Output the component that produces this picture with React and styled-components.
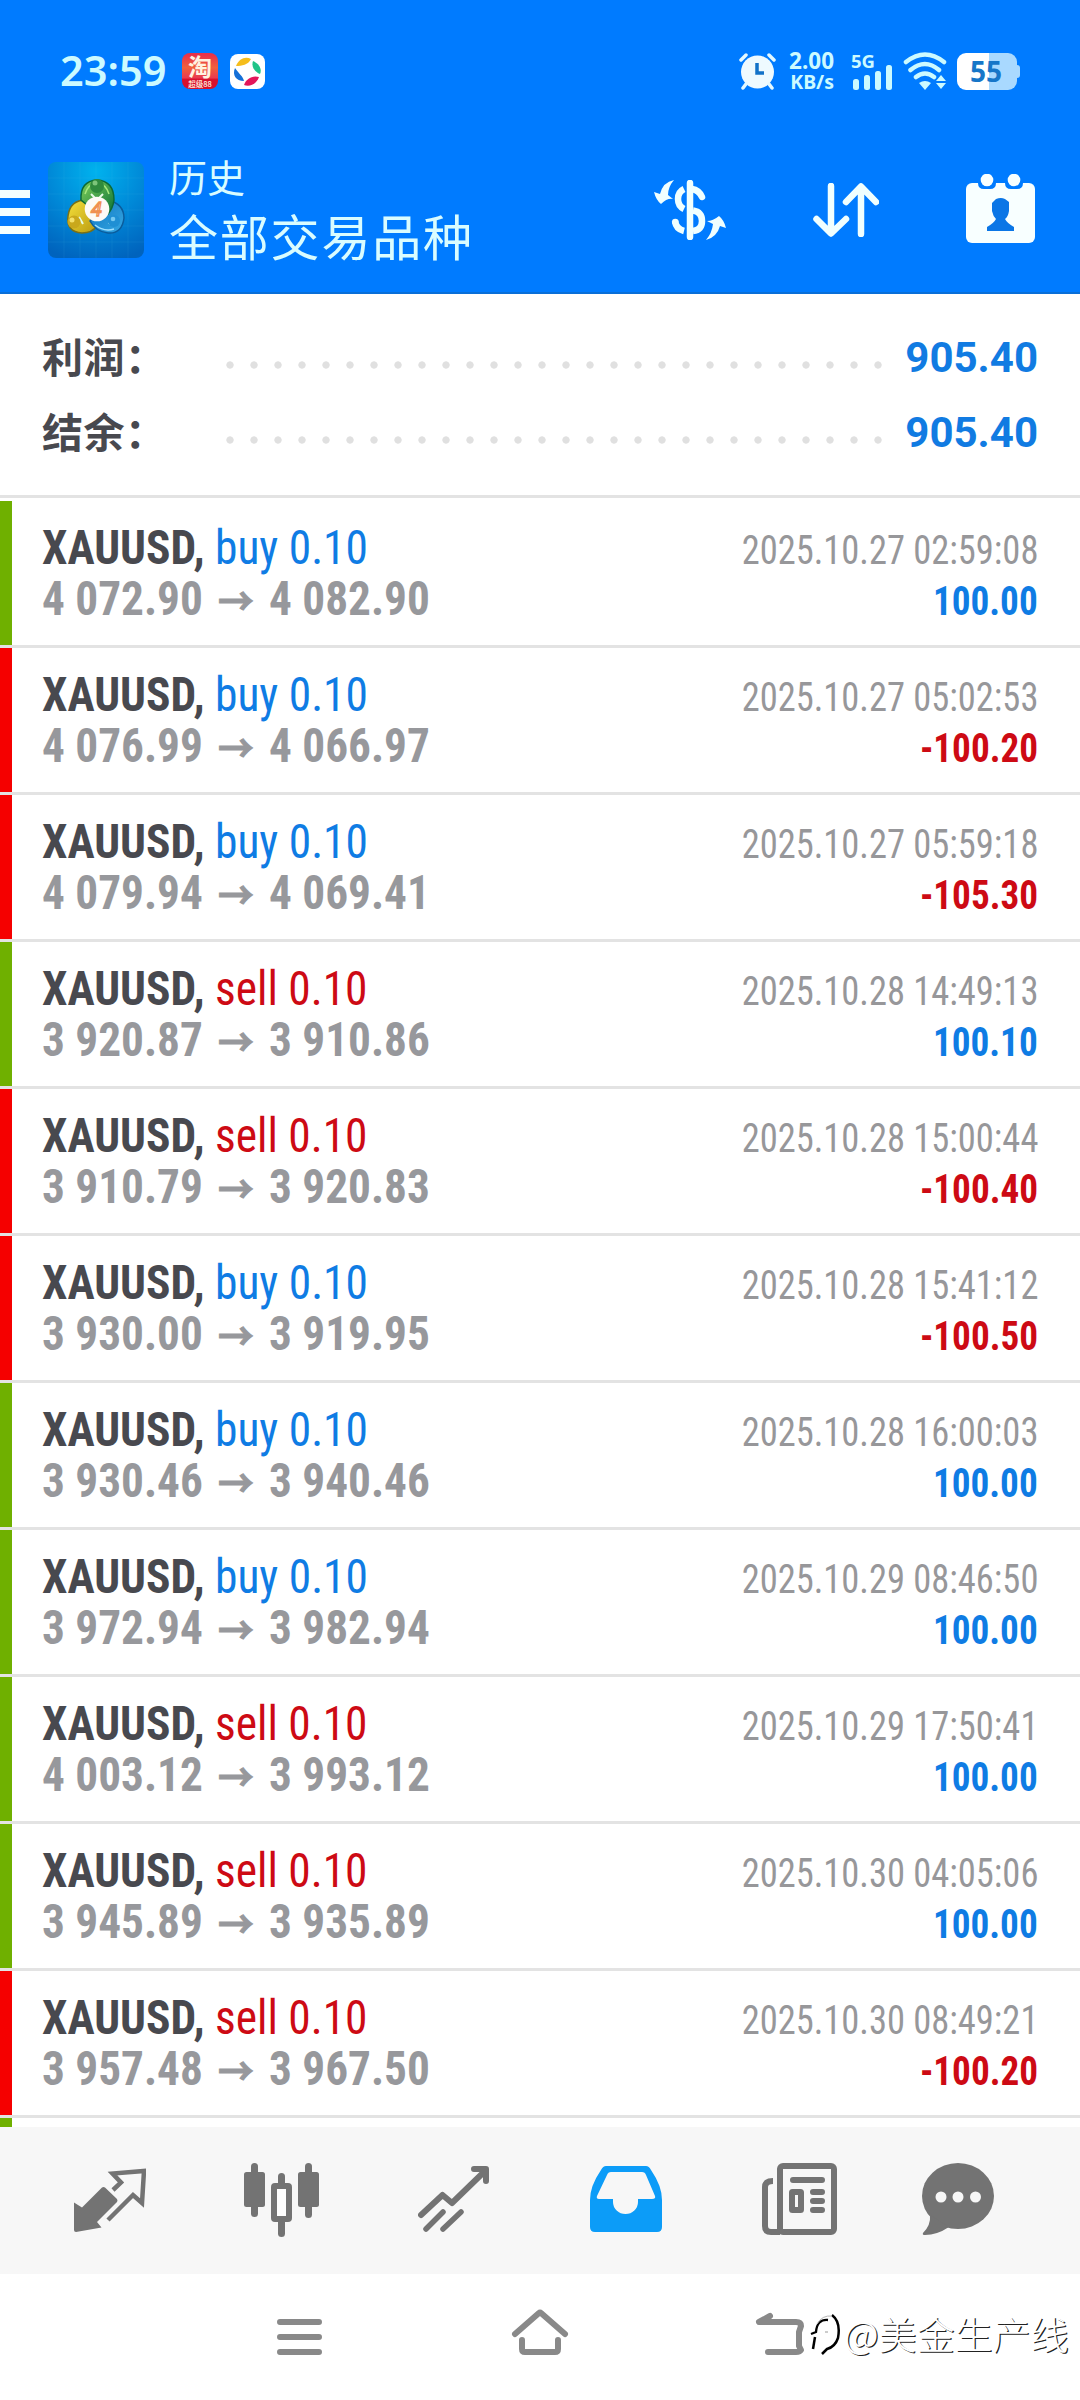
import React from "react";
import styled, { createGlobalStyle } from "styled-components";

const deals = [
	{ side: "buy", open: "4 072.90", close: "4 082.90", time: "2025.10.27 02:59:08", profit: "100.00" },
	{ side: "buy", open: "4 076.99", close: "4 066.97", time: "2025.10.27 05:02:53", profit: "-100.20" },
	{ side: "buy", open: "4 079.94", close: "4 069.41", time: "2025.10.27 05:59:18", profit: "-105.30" },
	{ side: "sell", open: "3 920.87", close: "3 910.86", time: "2025.10.28 14:49:13", profit: "100.10" },
	{ side: "sell", open: "3 910.79", close: "3 920.83", time: "2025.10.28 15:00:44", profit: "-100.40" },
	{ side: "buy", open: "3 930.00", close: "3 919.95", time: "2025.10.28 15:41:12", profit: "-100.50" },
	{ side: "buy", open: "3 930.46", close: "3 940.46", time: "2025.10.28 16:00:03", profit: "100.00" },
	{ side: "buy", open: "3 972.94", close: "3 982.94", time: "2025.10.29 08:46:50", profit: "100.00" },
	{ side: "sell", open: "4 003.12", close: "3 993.12", time: "2025.10.29 17:50:41", profit: "100.00" },
	{ side: "sell", open: "3 945.89", close: "3 935.89", time: "2025.10.30 04:05:06", profit: "100.00" },
	{ side: "sell", open: "3 957.48", close: "3 967.50", time: "2025.10.30 08:49:21", profit: "-100.20" },
];

const totals = [
	{ label: "利润：", value: "905.40" },
	{ label: "结余：", value: "905.40" },
];

const App = () => {
	return (
		<Screen>
			<GlobalStyle />
			<Top>
				<StatusBar />
				<Header />
			</Top>
			<Summary>
				{totals.map((item) => (
					<Total key={item.label}>
						<TotalLabel>{item.label}</TotalLabel>
						<Dots />
						<TotalValue>{item.value}</TotalValue>
					</Total>
				))}
			</Summary>
			<List>
				{deals.map((deal) => (
					<Deal key={deal.time} {...deal} />
				))}
				<Row $loss={false} />
			</List>
			<TabBar>
				<Tab $left={74}><QuotesIcon /></Tab>
				<Tab $left={98}><ChartIcon /></Tab>
				<Tab $left={99}><TradeIcon /></Tab>
				<Tab $left={101} $active><HistoryIcon /></Tab>
				<Tab $left={100}><NewsIcon /></Tab>
				<Tab $left={85}><ChatIcon /></Tab>
			</TabBar>
			<SystemNav>
				<MenuKey />
				<HomeKey />
				<BackKey />
				<Watermark>
					<WatermarkLogo />
					@美金生产线
				</Watermark>
			</SystemNav>
		</Screen>
	);
};

const Deal = ({ side, open, close, time, profit }) => {
	const loss = profit.startsWith("-");
	return (
		<Row $loss={loss}>
			<Line>
				<Symbol>
					XAUUSD, <Volume $side={side}>{side} 0.10</Volume>
				</Symbol>
				<Time>{time}</Time>
			</Line>
			<Line>
				<Price>
					{open} <Arrow>→</Arrow> {close}
				</Price>
				<Profit $loss={loss}>{profit}</Profit>
			</Line>
		</Row>
	);
};

const StatusBar = () => (
	<Status>
		<Clock>23:59</Clock>
		<TaobaoBadge>
			<b>淘</b>
			<i>超级88</i>
		</TaobaoBadge>
		<svg width="35" height="35" viewBox="0 0 35 35">
			<rect width="35" height="35" rx="8" fill="#fff" />
			<path d="M6 12C9 4 16 2 21 5C18 11 12 12 6 12Z" fill="#f5bd1c" />
			<path d="M23 7C30 10 32 16 30 20C25 18 21 13 23 7Z" fill="#1fc488" />
			<path d="M29 23C26 31 19 33 14 31C16 25 22 21 29 23Z" fill="#e3175a" />
			<path d="M5 14C2 21 6 27 14 27C13 22 9 20 5 14Z" fill="#1470d8" />
		</svg>
		<Spacer />
		<svg width="37" height="38" viewBox="0 0 37 38" fill="none" stroke="#e4f9ff" strokeLinecap="round">
			<circle cx="18.500" cy="20" r="16.500" fill="#eefaff" stroke="none" />
			<path d="M2 8L7 3M35 8L30 3" strokeWidth="3.500" />
			<path d="M7 32L4 36M30 32L33 36" strokeWidth="3.500" />
			<path d="M18 11V21H25" stroke="#1272c8" strokeWidth="3.500" strokeLinecap="butt" />
		</svg>
		<Speed>
			<span>2.00</span>
			<small>KB/s</small>
		</Speed>
		<Signal>
			<span>5G</span>
			<svg width="42" height="38" viewBox="0 0 42 38" fill="#ccfaff">
				<rect x="2" y="27" width="6" height="11" rx="2.500" />
				<rect x="13" y="23" width="6" height="15" rx="2.500" />
				<rect x="24" y="19" width="6" height="19" rx="2.500" />
				<rect x="35" y="13" width="6" height="25" rx="2.500" />
			</svg>
		</Signal>
		<svg width="44" height="38" viewBox="0 0 44 38" fill="none" stroke="#ccfaff" strokeWidth="4.500" strokeLinecap="round">
			<path d="M3 10Q22 -5 41 10M7.500 18Q22 6 36 18M13 25Q22 18 31 25" />
			<path d="M22 38L16 31Q22 27 28 31Z" fill="#ccfaff" stroke="none" />
			<path d="M38 23L43 29H33ZM38 37L43 31H33Z" fill="#ccfaff" stroke="none" />
		</svg>
		<Battery>55</Battery>
	</Status>
);

const Header = () => (
	<HeaderRow>
		<Burger>
			<span />
			<span />
			<span />
		</Burger>
		<AppLogo />
		<Titles>
			<small>历史</small>
			<h1>全部交易品种</h1>
		</Titles>
		<Actions>
			<svg width="72" height="60" viewBox="0 0 72 60" fill="none" stroke="#f0ffff" strokeWidth="6.500">
				<path d="M36 3V57" strokeLinecap="round" />
				<path d="M30 9Q24 12 24 19Q24 26 30 29" />
				<path d="M38 9Q45 10 48 17" strokeLinecap="round" />
				<path d="M39 30.500Q48 32 48 41Q48 50 39 51" />
				<path d="M21 41Q22 49 30 51" />
				<circle cx="21.300" cy="42" r="3.300" fill="#f0ffff" stroke="none" />
				<path d="M20 0Q9 2 6 14L0 12Q2 20 7 24Q13 18 19 19L14 15Q14 7 20 0Z" fill="#f0ffff" stroke="none" />
				<path d="M52 60Q63 57 66 46L72 48Q70 40 65 36Q59 41 53 41L59 44Q58 53 52 60Z" fill="#f0ffff" stroke="none" />
			</svg>
			<svg width="66" height="54" viewBox="0 0 66 54" fill="none" stroke="#f0ffff" strokeWidth="6.500" strokeLinecap="round" strokeLinejoin="round">
				<path d="M18 3V50M3.500 36L18 50.500L33 36" />
				<path d="M48 51V4M33 19L48 3.500L63 19" />
			</svg>
			<svg width="69" height="72" viewBox="0 1 69 72">
				<rect y="10" width="69" height="60" rx="6" fill="#f8ffff" />
				<path d="M12 8H30V10Q30 16 24 16H18Q12 16 12 10ZM39 8H57V10Q57 16 51 16H45Q39 16 39 10Z" fill="#007bff" />
				<circle cx="21" cy="7" r="6.300" fill="#f8ffff" />
				<circle cx="48" cy="7" r="6.300" fill="#f8ffff" />
				<path d="M26 30L30 26Q35 24 39 26L43 29V38Q42 44 39 46Q41 50 48 54V58H21V54Q28 50 30 46Q27 43 26 38Z" fill="#0b76e6" />
			</svg>
		</Actions>
	</HeaderRow>
);

const AppLogo = () => (
	<Logo width="96" height="96" viewBox="0 0 96 96">
		<defs>
			<radialGradient id="sky" cx="50%" cy="10%" r="95%">
				<stop offset="0" stopColor="#00b2ee" />
				<stop offset="0.550" stopColor="#0086d6" />
				<stop offset="1" stopColor="#0063bd" />
			</radialGradient>
			<linearGradient id="leaf" x1="0" y1="0" x2="1" y2="1">
				<stop offset="0" stopColor="#7fd05a" />
				<stop offset="1" stopColor="#0c7238" />
			</linearGradient>
			<linearGradient id="gold" x1="0" y1="0" x2="1" y2="1">
				<stop offset="0" stopColor="#f6e13c" />
				<stop offset="1" stopColor="#b99a10" />
			</linearGradient>
			<linearGradient id="aqua" x1="0" y1="0" x2="1" y2="1">
				<stop offset="0" stopColor="#0f74bf" />
				<stop offset="1" stopColor="#35a8e4" />
			</linearGradient>
		</defs>
		<rect width="96" height="96" rx="8" fill="url(#sky)" />
		<path d="M16 0V96M32 0V96M48 0V96M64 0V96M80 0V96M0 16H96M0 32H96M0 48H96M0 64H96M0 80H96" stroke="#4cc4f4" strokeOpacity="0.100" />
		<path d="M38 38Q22 38 20 54Q18 70 34 71Q44 71 49 64Z" fill="url(#gold)" stroke="#77701a" strokeWidth="1.500" />
		<path d="M60 38Q76 42 76 56Q74 72 60 71Q48 70 42 59Z" fill="url(#aqua)" stroke="#0a5c9c" strokeWidth="1.500" />
		<path d="M33 38Q32 19 49 18Q66 19 66 38Q65 46 60 52L38 42Z" fill="url(#leaf)" stroke="#0d6a35" strokeWidth="1.500" />
		<path d="M37 32Q40 22 49 21Q58 22 61 32" fill="none" stroke="#a6e87e" strokeWidth="1.500" />
		<path d="M47 63Q56 70 66 67" fill="none" stroke="#9fe0ff" strokeWidth="1.500" />
		<path d="M43 32L47 36H51L55 32M31 55L35 62M67 55L61 62" stroke="#e6fbe6" strokeWidth="2" fill="none" />
		<circle cx="49" cy="24" r="7" fill="#2f8a3c" />
		<circle cx="47" cy="21" r="2.500" fill="#7cc479" />
		<circle cx="26" cy="60" r="6.500" fill="#c9a81c" />
		<circle cx="24" cy="58" r="2.500" fill="#f4e06a" />
		<circle cx="66" cy="59" r="6" fill="#1f8fd4" />
		<circle cx="65" cy="57" r="2.300" fill="#74c8f2" />
		<circle cx="49" cy="47" r="12.300" fill="#fdfaf6" />
		<text x="48.500" y="54" textAnchor="middle" fontFamily="Roboto" fontStyle="italic" fontSize="20" fill="none" stroke="#f09050" strokeWidth="1.300">4</text>
	</Logo>
);

const QuotesIcon = () => (
	<svg width="72" height="74" viewBox="0 -6 72 74">
		<path d="M39 21L47 13.500L38.500 4.500L70 2L68 34L59 26L34 51" fill="none" stroke="currentColor" strokeWidth="4.500" />
		<path d="M28 18.500Q29.500 17.500 31 18.500L43 30Q44 32 43 33L23 53L27.500 58.500L2 63Q0 63 0 61V33.500L8 38.500Z" fill="currentColor" />
	</svg>
);

const ChartIcon = () => (
	<svg width="75" height="74" viewBox="0 0 75 74" fill="currentColor">
		<rect y="9" width="21" height="35" rx="2.500" />
		<rect x="7" width="7" height="54" rx="3.500" />
		<rect x="54" y="9" width="21" height="35" rx="2.500" />
		<rect x="61" width="7" height="55" rx="3.500" />
		<rect x="34" y="10" width="7" height="15" rx="3.500" />
		<rect x="34" y="55" width="7" height="19" rx="3.500" />
		<rect x="30" y="23" width="15" height="33" rx="1" fill="#fdfdfd" stroke="currentColor" strokeWidth="6" />
	</svg>
);

const TradeIcon = () => (
	<svg width="71" height="74" viewBox="0 -3 71 74" fill="none" stroke="currentColor" strokeWidth="6" strokeLinecap="round" strokeLinejoin="round">
		<path d="M3 49L24.500 29L34 37L68 4M56 3H68V15" />
		<path d="M8 63L25 46M25 63L43 46" strokeWidth="5.500" />
	</svg>
);

const HistoryIcon = () => (
	<svg width="72" height="74" viewBox="0 -3 72 74" fill="currentColor" fillRule="evenodd">
		<path d="M16 0H56Q59 0 61 4Q72 20 72 34V61Q72 66 67 66H5Q0 66 0 61V34Q0 20 11 4Q13 0 16 0ZM21 6Q18 6 17 9L7 30Q6 33 9 33H23V36A12.500 12 0 0 0 48 36V33H62Q66 33 65 30L56 9Q55 6 52 6Z" />
	</svg>
);

const NewsIcon = () => (
	<svg width="75" height="74" viewBox="0 0 75 74" fill="none" stroke="currentColor" strokeWidth="6">
		<rect x="18" y="3" width="54" height="66" rx="3" />
		<path d="M11 18Q3 18 3 24V63Q3 69 9 69H18" />
		<path d="M31 17H60M51 29H60M51 38H60M51 47H60" strokeLinecap="round" />
		<rect x="30" y="29" width="9" height="18" rx="0.500" />
	</svg>
);

const ChatIcon = () => (
	<svg width="72" height="74" viewBox="0 0 72 74" fill="currentColor">
		<ellipse cx="36" cy="33" rx="36" ry="33" />
		<path d="M8 52Q9 62 1 70Q0 72 3 72Q15 72 27 64Z" />
		<g fill="#f7f7f7">
			<circle cx="19" cy="34" r="5.500" />
			<circle cx="36" cy="34" r="5.500" />
			<circle cx="53.500" cy="34" r="5.500" />
		</g>
	</svg>
);

const MenuKey = () => (
	<Key width="45" height="48" viewBox="0 0 45 48" $left={277}>
		<path d="M3 14H42M3 29H42M3 44H42" />
	</Key>
);

const HomeKey = () => (
	<Key width="58" height="48" viewBox="0 0 58 48" $left={189}>
		<path d="M4 26L28 5Q29 4 30 5L54 26" />
		<path d="M11 32V41Q11 44 14 44H44Q47 44 47 41V32" />
	</Key>
);

const BackKey = () => (
	<Key width="50" height="48" viewBox="0 0 50 48" $left={186}>
		<path d="M15 8L4 14H41Q46 14 46 18L44 24V38L46 42Q45 44 41 44H13" />
	</Key>
);

const WatermarkLogo = () => (
	<svg width="34" height="46" viewBox="0 0 34 46" fill="none" stroke="#000">
		<path d="M24 5Q33 12 30 28Q27 37 19 39L14 44" strokeWidth="2.500" />
		<path d="M20 10Q9 9 8 22L3 24" strokeWidth="2.300" />
		<path d="M7 27L5 39" strokeWidth="2.500" />
		<path d="M9 14Q14 5 24 6" stroke="#b5b5b5" />
		<path d="M17 22H20" stroke="#999" />
	</svg>
);

const GlobalStyle = createGlobalStyle`
	* {
		box-sizing: border-box;
	}

	body {
		margin: 0;
		background: #fff;
	}

	svg {
		display: block;
		flex: none;
	}
`;

const Screen = styled.div`
	display: flex;
	flex-direction: column;
	width: 1080px;
	height: 2400px;
	overflow: hidden;
	background: #fff;
	font-family: "Roboto Condensed", Roboto, "Noto Sans CJK SC", sans-serif;
`;

const Top = styled.header`
	height: 294px;
	background: #007bff;
	border-bottom: 2px solid #0a6fd8;
`;

const Status = styled.div`
	display: flex;
	align-items: center;
	height: 142px;
	padding: 0 60px;
	color: #ccfaff;
	font-family: "Noto Sans", "Noto Sans CJK SC", sans-serif;
`;

const Clock = styled.span`
	width: 122px;
	margin-top: -3px;
	font-size: 41.5px;
	font-weight: 600;
`;

const TaobaoBadge = styled.div`
	display: flex;
	flex-direction: column;
	align-items: center;
	width: 36px;
	height: 36px;
	margin-right: 12px;
	border-radius: 8px;
	background: linear-gradient(#e8324a 0 5%, #f0603c 40%, #e83a50 70%, #d8102c 72%);
	color: #fff2e0;
	font-family: "Noto Sans CJK SC", sans-serif;

	b {
		font-size: 24px;
		line-height: 26px;
	}

	i {
		font-size: 7.5px;
		font-style: normal;
		font-weight: 500;
		line-height: 9px;
	}
`;

const Spacer = styled.div`
	flex: 1;
`;

const Speed = styled.div`
	display: flex;
	flex-direction: column;
	align-items: flex-end;
	width: 58px;
	margin-right: 17px;
	font-size: 22.5px;
	font-weight: 700;
	line-height: 21px;
	white-space: nowrap;

	small {
		font-size: 19.5px;
	}
`;

const Signal = styled.div`
	position: relative;
	margin-right: 10px;

	span {
		position: absolute;
		top: -2px;
		left: 0;
		font-size: 18.5px;
		font-weight: 700;
		line-height: 21px;
	}
`;

const Battery = styled.div`
	position: relative;
	width: 60px;
	height: 37px;
	margin: 0 3px 0 10px;
	border-radius: 9px;
	background: linear-gradient(90deg, #fff 54%, #a9d9ff 54%);
	color: #1776c8;
	font-size: 28px;
	font-weight: 700;
	line-height: 36px;
	text-align: center;
	text-indent: -2px;

	&::after {
		content: "";
		position: absolute;
		top: 12px;
		right: -3px;
		width: 3px;
		height: 13px;
		border-radius: 0 3px 3px 0;
		background: #a9d9ff;
	}
`;

const HeaderRow = styled.div`
	display: flex;
	align-items: center;
	height: 136px;
`;

const Burger = styled.div`
	display: flex;
	flex-direction: column;
	gap: 10px;
	width: 30px;
	margin: 4px 18px 0 0;

	span {
		height: 8px;
		background: #f4ffff;
	}
`;

const Logo = styled.svg`
	margin-right: 25px;
`;

const Titles = styled.div`
	flex: 1;
	color: #d9fcff;
	font-family: "Noto Sans CJK SC", sans-serif;

	small {
		display: block;
		font-size: 38px;
		line-height: 50px;
	}

	h1 {
		margin: 0;
		font-size: 49px;
		font-weight: 400;
		letter-spacing: 1.8px;
		line-height: 68px;
	}
`;

const Actions = styled.div`
	display: flex;
	align-items: center;
	gap: 87px;
	padding-right: 45px;
`;

const Summary = styled.section`
	height: 204px;
	padding: 27px 42px 0;
	border-bottom: 3px solid #e3e3e3;
`;

const Total = styled.div`
	display: flex;
	align-items: center;
	height: 75px;
`;

const TotalLabel = styled.span`
	width: 184px;
	margin-top: -7px;
	color: #48494f;
	font-family: "Noto Sans CJK SC", sans-serif;
	font-size: 41px;
	font-weight: 700;
	letter-spacing: 0.5px;
	line-height: 70px;
`;

const Dots = styled.i`
	width: 656px;
	height: 8px;
	margin-top: 12px;
	background: radial-gradient(circle at 4px 4px, #e0e0e0 3.3px, transparent 4px) 0 0 / 24px 8px repeat-x;
`;

const TotalValue = styled.span`
	flex: 1;
	margin-top: -1px;
	color: #117be2;
	font-family: Roboto, sans-serif;
	font-size: 42px;
	font-weight: 700;
	line-height: 74px;
	text-align: right;
`;

const List = styled.section`
	flex: 1;
	overflow: hidden;
	padding-top: 3px;
`;

const stripe = (loss) => (loss ? "#f50000" : "#6fb000");

const Row = styled.article`
	height: 147px;
	padding: 21px 42px 0;
	border-bottom: 3px solid #e3e3e3;
	background: linear-gradient(${(props) => stripe(props.$loss)} 0 0) 0 0 / 12px 100% no-repeat padding-box;
`;

const Line = styled.div`
	display: flex;
	align-items: baseline;
	justify-content: space-between;
	height: 51px;
	line-height: 51px;
	white-space: nowrap;
`;

const Symbol = styled.span`
	color: #48494f;
	font-size: 48px;
	font-weight: 700;
	transform: scaleX(0.946);
	transform-origin: left;
`;

const Volume = styled.span`
	color: ${(props) => (props.$side === "buy" ? "#0f7ce4" : "#cd0a14")};
	font-weight: 400;
`;

const Time = styled.span`
	color: #97979a;
	font-size: 40px;
	font-weight: 400;
	transform: scaleX(0.912);
	transform-origin: right;
`;

const Price = styled.span`
	color: #97989c;
	font-size: 48px;
	font-weight: 700;
	transform: scaleX(0.943);
	transform-origin: left;
`;

const Arrow = styled.span`
	display: inline-block;
	width: 48px;
	font-family: "Noto Sans CJK SC", sans-serif;
	font-size: 38px;
	line-height: 0;
	text-align: center;
	-webkit-text-stroke: 1px currentColor;
`;

const Profit = styled.span`
	color: ${(props) => (props.$loss ? "#cd0a14" : "#0f7ce4")};
	font-size: 40px;
	font-weight: 700;
	transform: scaleX(0.93);
	transform-origin: right;
`;

const TabBar = styled.nav`
	display: flex;
	align-items: flex-start;
	height: 147px;
	padding-top: 36px;
	background: #f7f7f7;
`;

const Tab = styled.div`
	margin-left: ${(props) => props.$left}px;
	color: ${(props) => (props.$active ? "#0c9cf8" : "#737373")};
`;

const SystemNav = styled.footer`
	position: relative;
	display: flex;
	height: 126px;
	padding-top: 34px;
	background: #fff;
`;

const Key = styled.svg`
	margin-left: ${(props) => props.$left}px;
	fill: none;
	stroke: #898989;
	stroke-width: 6px;
	stroke-linecap: round;
	stroke-linejoin: round;
`;

const Watermark = styled.div`
	position: absolute;
	top: 34px;
	left: 808px;
	display: flex;
	align-items: center;
	gap: 2px;
	color: #fff;
	font-family: "Noto Sans CJK SC", sans-serif;
	font-size: 38px;
	font-weight: 300;
	line-height: 50px;
	text-shadow: 1.2px 1.2px 0 #222;
	white-space: nowrap;
`;

export default App;
